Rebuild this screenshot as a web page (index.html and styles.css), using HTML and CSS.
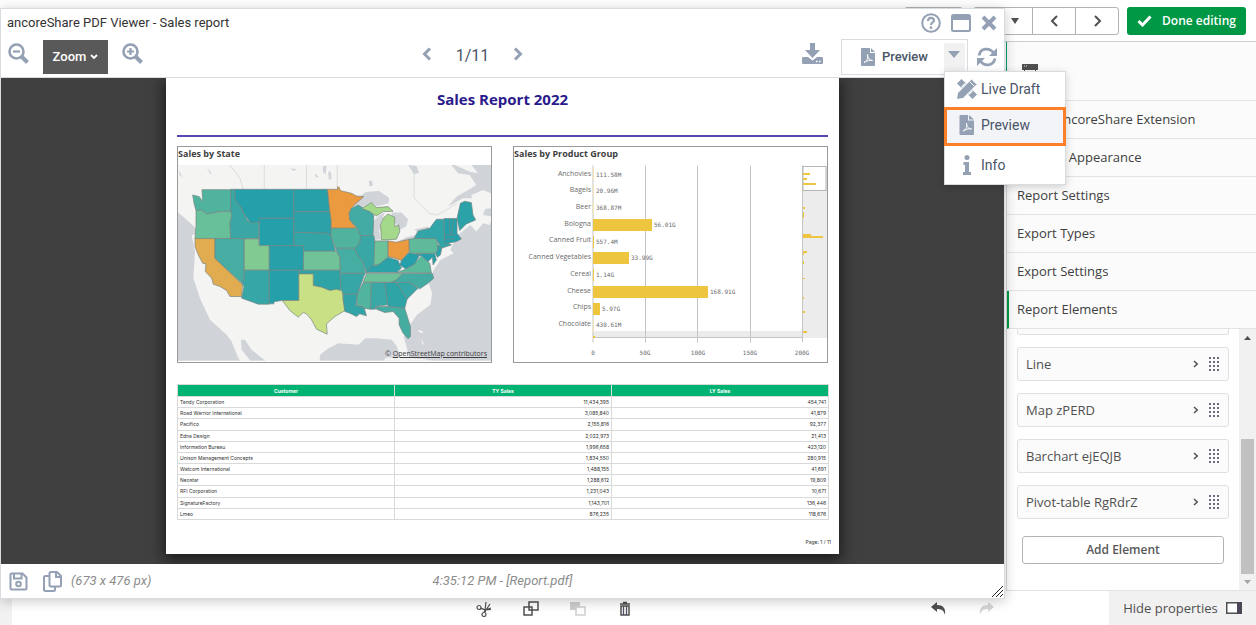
FILE: index.html
```html
<!DOCTYPE html>
<html lang="en">
<head>
<meta charset="utf-8">
<title>ancoreShare PDF Viewer - Sales report</title>
<link rel="stylesheet" href="styles.css">
</head>
<body>
<div class="app">
  <header class="topbar">
    <button class="btn btn-edge" aria-label="Sheet"></button>
    <div class="btn-group">
      <button class="btn btn-caret" aria-label="Sheets"><svg width="10" height="6" viewBox="0 0 10 6"><path d="M1 0h8L5 6z" fill="#505050"/></svg></button>
      <button class="btn" aria-label="Previous sheet"><svg width="9" height="12" viewBox="0 0 9 12"><path d="M7 1 2 6l5 5" fill="none" stroke="#505050" stroke-width="2"/></svg></button>
      <button class="btn" aria-label="Next sheet"><svg width="9" height="12" viewBox="0 0 9 12"><path d="M2 1l5 5-5 5" fill="none" stroke="#505050" stroke-width="2"/></svg></button>
    </div>
    <button class="btn-done"><svg width="15" height="12" viewBox="0 0 15 12"><path d="M1.500 6l4 4L13.500 1.500" fill="none" stroke="#fff" stroke-width="3"/></svg>Done editing</button>
  </header>

  <main class="workspace">
    <div class="canvas"></div>
    <aside class="props">
      <div class="props-head"><svg width="16" height="16" viewBox="0 0 16 16"><path d="M0 0h16v6h-2v2h-1V6H3v2H2V6H0z" fill="#505050"/><path d="M2 2h1M4 2h1" stroke="#ddd"/></svg></div>
      <button class="section tucked">ancoreShare Extension</button>
      <button class="section tucked">&amp; Appearance</button>
      <button class="section">Report Settings</button>
      <button class="section">Export Types</button>
      <button class="section">Export Settings</button>
      <button class="section current">Report Elements</button>
      <div class="elements">
        <div class="list">
          <div class="card-tail"></div>
          <button class="card"><span>Line</span><svg class="card-go" viewBox="0 0 6 8"><path d="M1 1l3.200 3L1 7" /></svg><svg class="grip" viewBox="0 0 11 14"><path d="M1 0v14M5 0v14M9 0v14"/></svg></button>
          <button class="card"><span>Map zPERD</span><svg class="card-go" viewBox="0 0 6 8"><path d="M1 1l3.200 3L1 7" /></svg><svg class="grip" viewBox="0 0 11 14"><path d="M1 0v14M5 0v14M9 0v14"/></svg></button>
          <button class="card"><span>Barchart ejEQJB</span><svg class="card-go" viewBox="0 0 6 8"><path d="M1 1l3.200 3L1 7" /></svg><svg class="grip" viewBox="0 0 11 14"><path d="M1 0v14M5 0v14M9 0v14"/></svg></button>
          <button class="card"><span>Pivot-table RgRdrZ</span><svg class="card-go" viewBox="0 0 6 8"><path d="M1 1l3.200 3L1 7" /></svg><svg class="grip" viewBox="0 0 11 14"><path d="M1 0v14M5 0v14M9 0v14"/></svg></button>
          <button class="add">Add Element</button>
        </div>
        <div class="scroll">
          <svg width="7" height="4" viewBox="0 0 7 4"><path d="M0 4h7L3.500 0z" fill="#505050"/></svg>
          <div class="thumb"></div>
          <svg width="7" height="4" viewBox="0 0 7 4"><path d="M0 0h7L3.500 4z" fill="#a3a3a3"/></svg>
        </div>
      </div>
    </aside>
  </main>

  <footer class="bottombar">
    <div class="edit-tools">
      <button class="tool" aria-label="Cut"><svg viewBox="0 0 16 16"><g fill="none" stroke="#505050" stroke-width="1.200"><circle cx="3" cy="6.500" r="2"/><circle cx="8" cy="13.500" r="2"/><path d="M5 7.500l4 1.500 6-.5M8 11.500 9 9 10 1M5 7l4 2 6-2M9 11l1-2 4-6"/></g></svg></button>
      <button class="tool" aria-label="Copy"><svg viewBox="0 0 16 16"><g fill="#fff" stroke="#505050" stroke-width="1.500"><path d="M1 6h8v8H1zM6 1h9v8H6z"/></g></svg></button>
      <button class="tool" aria-label="Paste" disabled><svg viewBox="0 0 16 16"><path d="M0 1h10v8H0z" fill="#cfcfcf"/><path d="M6 6h9v8H6z" fill="#fff" stroke="#cfcfcf" stroke-width="1.500"/></svg></button>
      <button class="tool" aria-label="Delete"><svg viewBox="0 0 16 16"><path d="M3 3h10M6 1.500h4M4 5v9h8V5z" fill="none" stroke="#505050" stroke-width="1.500"/><path d="M6.500 5v9M9.500 5v9" stroke="#505068" stroke-width="1.300"/></svg></button>
    </div>
    <div class="history">
      <button class="tool" aria-label="Undo"><svg viewBox="0 0 16 16"><path d="M0 6l6-5v3c6 0 9 3 8 10-1-4-3-6-8-6v3z" fill="#505050"/></svg></button>
      <button class="tool" aria-label="Redo" disabled><svg viewBox="0 0 16 16"><path d="M16 6l-6-5v3c-6 0-9 3-8 10 1-4 3-6 8-6v3z" fill="#d6d6d6"/></svg></button>
    </div>
    <button class="hide-props">Hide properties<svg width="16" height="12" viewBox="0 0 16 12"><path d="M.75.75h14.500v10.500H.75z" fill="#fff" stroke="#505050" stroke-width="1.500"/><path d="M11 0h5v12h-5z" fill="#4c4656"/></svg></button>
  </footer>
</div>

<section class="viewer" aria-label="PDF viewer">
  <div class="titlebar">
    <h1>ancoreShare PDF Viewer - Sales report</h1>
    <div class="win-buttons">
      <button class="icon" aria-label="Help"><svg width="20" height="20" viewBox="0 0 20 20"><circle cx="10" cy="10" r="8.800" fill="none" stroke="#94a0b4" stroke-width="2"/><path d="M7 8c0-4 6-4 6-.6C13 9.500 10 9.300 10 12" fill="none" stroke="#94a0b4" stroke-width="2.200"/><circle cx="10" cy="14.700" r="1.400" fill="#94a0b4"/></svg></button>
      <button class="icon" aria-label="Maximize"><svg width="20" height="18" viewBox="0 0 20 18"><rect x="1" y="1" width="18" height="16" rx="1.500" fill="#fff" stroke="#94a0b4" stroke-width="2"/><path d="M1 1h18v5H1z" fill="#94a0b4"/></svg></button>
      <button class="icon" aria-label="Close"><svg width="16" height="16" viewBox="0 0 16 16"><path d="M2 2l12 12M14 2 2 14" stroke="#94a0b4" stroke-width="4"/></svg></button>
    </div>
  </div>
  <div class="toolbar">
    <div class="zoom-tools">
      <button class="icon lens" aria-label="Zoom out"><svg width="21" height="21" viewBox="0 0 21 21"><g fill="none" stroke="#94a0b4"><circle cx="8.500" cy="8.500" r="7" stroke-width="2.600"/><path d="M5 8.500h7" stroke-width="2.200"/><path d="M13.500 13.500l6 6" stroke-width="4"/></g></svg></button>
      <button class="zoom-btn">Zoom<svg width="8" height="6" viewBox="0 0 8 6"><path d="M1 1l3 3 3-3" fill="none" stroke="#fff" stroke-width="1.800"/></svg></button>
      <button class="icon lens" aria-label="Zoom in"><svg width="21" height="21" viewBox="0 0 21 21"><g fill="none" stroke="#94a0b4"><circle cx="8.500" cy="8.500" r="7" stroke-width="2.600"/><path d="M5 8.500h7M8.500 5v7" stroke-width="2.200"/><path d="M13.500 13.500l6 6" stroke-width="4"/></g></svg></button>
    </div>
    <div class="pager">
      <button class="icon" aria-label="Previous page"><svg width="10" height="14" viewBox="0 0 10 14"><path d="M8 1.500 2.500 7 8 12.500" fill="none" stroke="#94a0b4" stroke-width="3"/></svg></button>
      <span class="page-no">1/11</span>
      <button class="icon" aria-label="Next page"><svg width="10" height="14" viewBox="0 0 10 14"><path d="M2 1.500 7.500 7 2 12.500" fill="none" stroke="#94a0b4" stroke-width="3"/></svg></button>
    </div>
    <div class="actions">
      <button class="icon download" aria-label="Download"><svg width="21" height="21" viewBox="0 0 21 21"><path d="M8 0h5v7h5l-7.500 8L3 7h5z" fill="#94a0b4"/><path d="M1 14h5l4.500 3.500L15 14h5q1 0 1 1v5q0 1-1 1H1q-1 0-1-1v-5q0-1 1-1z" fill="#94a0b4"/><path d="M14 18.500h1.500M17 18.500h1.500" stroke="#fff" stroke-width="1.500"/></svg></button>
      <div class="split">
        <button class="split-main"><svg width="14" height="18" viewBox="0 0 14 18"><path d="M1 0h8v5h5v12q0 1-1 1H1q-1 0-1-1V1q0-1 1-1zM10 0l4 4h-4z" fill="#94a0b4"/><path d="M3 14.500c4-2 4-5 3.500-8 0 4 2 5.500 5 6-3-.5-5 0-8.500 2z" fill="none" stroke="#fff"/></svg>Preview</button>
        <button class="split-caret" aria-label="Choose mode"><svg width="12" height="7" viewBox="0 0 12 7"><path d="M0 0h12L6 7z" fill="#94a0b4"/></svg></button>
      </div>
      <button class="icon" aria-label="Refresh"><svg width="20" height="20" viewBox="0 0 20 20"><g fill="none" stroke="#94a0b4" stroke-width="2.800"><path d="M2 8.500C3.500 1 12.500 0 16.500 6"/><path d="M18 11.500C16.500 19 7.500 20 3.500 14"/></g><path d="M20 1v8h-8zM0 19v-8h8z" fill="#94a0b4"/></svg></button>
    </div>
  </div>

  <div class="stage">
    <article class="paper">
      <h2>Sales Report 2022</h2>
      <div class="panels">
        <figure class="panel">
          <figcaption>Sales by State</figcaption>
          <div class="map-box">
          <svg class="map" viewBox="24 75 940 588" role="img" aria-label="Map of sales by state">
            <path d="M24 75h940v588H24z" fill="#d0d3d8"/>
            <path class="land" d="M24 75H845l20 25 35 5 20 30-25 15-35 20-25 30 45-25 40 0 30 20-10 30 30 5-10 25-20-5-20 25-18-20-42 35-18 40 10 10-40 20-20 30-15 40 10 30-5 35-40 30-25 35-15 30 17 65-3 25-20-15-15-45-15-20-45-5-35 0-20 20-60-5-30 15-25 20-5 45-7 80H370l-25-50-50-50-50-40-20-30-12 0 2 30 40 50 35 50 5 30-45-45-45-60-20-50-15-20-50-45-30-65-20-60 5-80-10-50 30-5-50-45-24-20z"/>
            <path class="land" d="M905 165l35-15 24 10v45l-50 5zM855 75h50l20 25-25-5zM24 120l20 10 40 30-30-12-30-20zM745 570l15 5-2 5-12-5zM755 595l8 20-5-2zM650 653l60 0 50 5 30 5H640zM860 200l55-20 10 5-50 20z"/>
            <path class="borderline" d="M283 75v73M502 75v65M410 75v73M180 75l30 40 10 33M733 75v100M733 175l45 45 25 5 60-35"/>
            <g fill="#d0d3d8">
              <path d="M543 198l15-20 30-22 40-3 30 20-2 18-35 8-20-10-22 10zM612 300l-2-55 20-20 15-7-10 25-7 30 5 25zM665 218l30 0 20 20-5 20-25 15-5-20-10-10zM680 307l30-15 40-10-10 12-35 15zM735 268l40-8 5 7-40 8zM715 75l25 3 8 20-15 5zM460 78l10 0-3 25-8-8zM475 95l8 0 2 22-8 2zM435 100l12 10-8 3zM110 80l15 20-4 3zM28 92l10 22-10-10zM597 123l10 0 2 14-10 2zM360 85l20 3-8 5z"/>
            </g>
            <g class="states">
              <path fill="#4fb39e" d="M96 149H182V214L150 215 110 222 95 210 78 212 72 190 68 165 88 170 98 185z"/>
              <path fill="#68c09a" d="M78 212L95 210 110 222 150 215 182 214 186 225 180 250 182 296H75L78 260z"/>
              <path fill="#e0ac4f" d="M75 296H135V355L218 435 215 470H180L170 452 150 440 130 433 125 415 106 395 108 372 98 370 85 345 75 320z"/>
              <path fill="#47ada2" d="M135 296H223V410L216 430 135 355z"/>
              <path fill="#3aa7a5" d="M182 148H194L196 175 215 205 220 218 235 245 267 240V296H182L180 250 186 225 182 214z"/>
              <path fill="#24a0aa" d="M194 148H372V235H270L268 246 240 248 220 218 215 205 196 178z"/>
              <path fill="#24a0aa" d="M268 235H372V317H268z"/>
              <path fill="#81cb93" d="M223 297H267V317H298V391H223z"/>
              <path fill="#27a0a9" d="M298 317H401V391H298z"/>
              <path fill="#36a6a6" d="M223 391H298V493H265L215 475 222 440 216 430 223 410z"/>
              <path fill="#24a0aa" d="M298 391H387V482H335L312 486V492H298z"/>
              <path fill="#27a0a9" d="M372 148H473L480 215H372z"/>
              <path fill="#2ca2a8" d="M372 215H480L484 240V288L470 280 372 277z"/>
              <path fill="#33a5a7" d="M372 277L470 280 484 288 497 334H401V317H372z"/>
              <path fill="#70c398" d="M401 334H500L511 355V391H401z"/>
              <path fill="#2fa4a7" d="M387 391H511L513 450 480 452 455 442 430 437V402H387z"/>
              <path fill="#c9e085" d="M387 402H430V437L455 442 480 452 500 448 518 455 520 480 526 512 495 530 470 552 472 583 440 568 425 540 410 522 400 518 385 532 360 512 337 482H387z"/>
              <path fill="#ec9a3f" d="M473 148H503V140L508 142 512 152 545 160 560 168 582 170 553 195 545 205 538 220 540 240 560 265H484V240L480 215z"/>
              <path fill="#4fb39e" d="M484 265H560L575 290 570 310 555 325H497L484 288z"/>
              <path fill="#46ada2" d="M497 325H555L562 345 580 365 588 400 580 404 575 400H511V355z"/>
              <path fill="#36a6a6" d="M511 401H585L575 430 563 463H520L518 455 513 450z"/>
              <path fill="#30a4a7" d="M520 463H563L558 498 582 500 590 528 570 522 560 530 540 520 525 515 520 480z"/>
              <path fill="#43aba3" d="M545 205L565 195 600 215 612 225 610 287H572L560 262 540 240 538 220z"/>
              <path fill="#38a7a5" d="M572 287H612L615 303V370L605 390 590 398 580 365 562 345 555 325 570 310z"/>
              <path fill="#a4d88b" d="M575 205L605 188 620 203 655 200 670 214 640 215 620 228 600 215z"/>
              <path fill="#a4d88b" d="M635 300L632 255 640 235 655 222 675 232 675 260 687 255 690 275 680 298z"/>
              <path fill="#6dc299" d="M615 303H655V352L640 365 625 375H612z"/>
              <path fill="#ec9a3f" d="M655 303L680 307 718 298V335L695 362 675 355 655 350z"/>
              <path fill="#2aa2a8" d="M590 398L605 378 625 375 655 352 685 362 695 385 680 398z"/>
              <path fill="#6dc299" d="M580 427L590 401H700L680 420 665 427z"/>
              <path fill="#50b49e" d="M580 428H605L602 508 580 505 578 498H560L563 463z"/>
              <path fill="#3aa8a5" d="M605 428H645L655 495 617 500V508H602z"/>
              <path fill="#2fa4a7" d="M645 428H680L712 478 705 505 655 500z"/>
              <path fill="#45aca2" d="M617 501L655 500 705 505 722 560V590L715 597 700 580 688 555V535L670 515 645 518 620 508z"/>
              <path fill="#36a6a6" d="M680 430L695 424 715 425 745 445 712 478z"/>
              <path fill="#44aba3" d="M700 401H788L792 415 775 430 750 447 720 428 665 427 680 420z"/>
              <path fill="#5bb99c" d="M680 398L710 387 730 375 755 348 780 370 785 399z"/>
              <path fill="#24a0aa" d="M695 362L718 338 750 345 735 372 708 387 690 375z"/>
              <path fill="#24a0aa" d="M738 341H795L800 360 790 375 788 352 775 365 755 348z"/>
              <path fill="#5fba9b" d="M718 298L730 296H798L805 315 803 332 795 340H720z"/>
              <path fill="#2ca2a8" d="M805 315L817 322 812 345 803 352 797 340 803 332z"/>
              <path fill="#31a5a7" d="M733 295L745 273 780 265 800 238H823L825 305 845 315 815 325 798 296z"/>
              <path fill="#24a0aa" d="M823 236H862V280L875 297 860 305 825 312zM838 236L842 285M852 236L846 285M825 285H860M825 297H855"/>
              <path fill="#2aa2a8" d="M862 235L872 190 885 184 905 188 910 225 918 240 890 252 870 272z"/>
            </g>
          </svg>
          <a class="credit" href="#osm">© <u>OpenStreetMap contributors</u></a>
          </div>
        </figure>

        <figure class="panel">
          <figcaption>Sales by Product Group</figcaption>
          <svg class="chart" viewBox="0 0 313 196" role="img" aria-label="Bar chart of sales by product group">
            <path d="M79 166h210v7H79z" fill="#ececec"/>
            <path d="M289 1h24v172h-24z" fill="#ececec"/>
            <path d="M79 .500v177M131.500 .500v177M183.500 .500v177M236.500 .500v177M288.500 .500v177M79 172.500h210" stroke="#c4c4c4" fill="none"/>
            <rect x="289" y="1.500" width="23" height="24" fill="#fff" stroke="#b5b5b5"/>
            <g fill="#edc53f">
              <path d="M79 54h59v12H79zM79 87h36v12H79zM79 121h115v12H79zM79 138h7v12h-7z"/>
              <path d="M79 71h1v12h-1zM79 104h1v12h-1zM79 171h2v2h-2z"/>
              <path d="M289 8h7v2h-7zM289 13h4v2h-4zM289 18h13v2h-13zM289 42h2v2h-2zM289 69h8v2h-8zM289 71h20v2h-20zM289 86h4v2h-4zM289 88h1v2h-1zM289 113h2v1h-2zM289 132h1v2h-1zM289 146h2v2h-2zM289 166h4v2h-4zM289 96h1v3h-1zM289 47h1v6h-1z"/>
            </g>
            <path d="M79.500 3v12M79.500 20v12M79.500 37v12M79.500 155v12" stroke="#f6e6ae"/>
            <g class="cat">
              <text x="77" y="11">Anchovies</text><text x="77" y="27">Bagels</text><text x="77" y="44">Beer</text><text x="77" y="61">Bologna</text><text x="77" y="77">Canned Fruit</text><text x="77" y="94">Canned Vegetables</text><text x="77" y="111">Cereal</text><text x="77" y="128">Cheese</text><text x="77" y="144">Chips</text><text x="77" y="161">Chocolate</text>
            </g>
            <g class="val">
              <text x="82" y="12">111.58M</text><text x="82" y="28">20.96M</text><text x="82" y="45">368.87M</text><text x="140" y="62">56.01G</text><text x="82" y="79">557.4M</text><text x="117" y="95">33.99G</text><text x="82" y="112">1.14G</text><text x="196" y="129">168.91G</text><text x="88" y="146">5.97G</text><text x="82" y="162">430.61M</text>
            </g>
            <g class="tick">
              <text x="79" y="190">0</text><text x="131" y="190">50G</text><text x="184" y="190">100G</text><text x="236" y="190">150G</text><text x="288" y="190">200G</text>
            </g>
          </svg>
        </figure>
      </div>

      <table class="sales">
        <thead><tr><th>Customer</th><th>TY Sales</th><th>LY Sales</th></tr></thead>
        <tbody>
          <tr><td>Tandy Corporation</td><td>11,434,395</td><td>454,741</td></tr>
          <tr><td>Road Warrior International</td><td>3,085,840</td><td>41,879</td></tr>
          <tr><td>Pacifico</td><td>2,155,816</td><td>92,377</td></tr>
          <tr><td>Edna Design</td><td>2,022,973</td><td>21,413</td></tr>
          <tr><td>Information Bureau</td><td>1,996,658</td><td>423,120</td></tr>
          <tr><td>Unison Management Concepts</td><td>1,834,550</td><td>280,915</td></tr>
          <tr><td>Watcom International</td><td>1,488,155</td><td>41,691</td></tr>
          <tr><td>Neostar</td><td>1,288,612</td><td>19,809</td></tr>
          <tr><td>RFI Corporation</td><td>1,231,043</td><td>10,671</td></tr>
          <tr><td>SignatureFactory</td><td>1,143,701</td><td>136,446</td></tr>
          <tr><td>Lmeo</td><td>876,235</td><td>118,676</td></tr>
        </tbody>
      </table>
      <p class="page-mark">Page: 1 / 11</p>
    </article>
  </div>

  <div class="statusbar">
    <div class="status-left">
      <button class="icon" aria-label="Save"><svg width="19" height="19" viewBox="0 0 19 19"><g fill="none" stroke="#94a0b4" stroke-width="2"><path d="M2.500 1.500h11l4 4v11q0 1-1 1h-14q-1 0-1-1v-14q0-1 1-1z"/><path d="M5 2v4.500h7.500V2"/><circle cx="9.500" cy="12" r="2.300"/></g></svg></button>
      <button class="icon" aria-label="Copy file"><svg width="19" height="21" viewBox="0 0 19 21"><g fill="none" stroke="#94a0b4" stroke-width="2"><path d="M8 1h6l4 4v9q0 1.500-1.500 1.500H8q-1.500 0-1.500-1.500V2.500Q6.500 1 8 1z"/><path d="M13 1.500V6h4.500M6 5H2.500Q1 5 1 6.500v12Q1 20 2.500 20h8q1.500 0 1.500-1.500V16"/></g></svg></button>
      <span>(673 x 476 px)</span>
    </div>
    <span>4:35:12 PM - [Report.pdf]</span>
    <svg class="resize" width="11" height="11" viewBox="0 0 11 11"><path d="M0 11 11 0M4 11l7-7M8 11l3-3" stroke="#222" stroke-width="1"/></svg>
  </div>

  <div class="menu" role="menu">
    <button class="menu-item" role="menuitem"><svg width="20" height="20" viewBox="0 0 20 20"><path d="M0 4.500 4.500 0 20 15.500 15.500 20z" fill="#94a0b4"/><path d="M4.500 8.500l2-2M8.500 4.500l-2 2M11.500 15.500l2-2M15.500 11.500l-2 2" stroke="#fff" stroke-width="1.500"/><path d="M-.5 20.500l1-6.500L14.500 0 20 5.500 6 19.500z" fill="#94a0b4" stroke="#fff"/><path d="M12.500 2.500l5 5" stroke="#fff"/></svg><span>Live Draft</span></button>
    <button class="menu-item chosen" role="menuitem"><svg width="20" height="20" viewBox="0 0 20 20"><path d="M4 0h7v5.500h6V19q0 1-1 1H3.500q-1 0-1-1V1q0-1 1-1zM12 0l5 4.500h-5z" fill="#94a0b4"/><path d="M6 16c4-2 4-5 3.500-8 0 4 2 5.500 5 6-3-.5-5 0-8.500 2z" fill="none" stroke="#fff"/></svg><span>Preview</span></button>
    <button class="menu-item" role="menuitem"><svg width="20" height="20" viewBox="0 0 20 20"><circle cx="10" cy="2.500" r="2.500" fill="#94a0b4"/><path d="M6.500 7H12v10h2v3H6v-3h2v-7H6.500z" fill="#94a0b4"/></svg><span>Info</span></button>
  </div>
</section>
</body>
</html>
```

FILE: styles.css
```css
* { box-sizing: border-box; }
body { margin: 0; background: #fff; color: #404040; font: 13px/18px "Open Sans", "Noto Sans", sans-serif; overflow: hidden; }
button { margin: 0; padding: 0; border: 0; background: none; color: inherit; font: inherit; }
svg { display: block; flex: none; }
h1, h2, p, figure { margin: 0; }

.app { display: flex; flex-direction: column; height: 100vh; }

.topbar { display: flex; justify-content: flex-end; align-items: flex-start; height: 42px; padding: 7px 10px 0 0; border-bottom: 1px solid #ccc; }
.btn { display: flex; align-items: center; justify-content: center; width: 44px; height: 28px; border: 1px solid #b3b3b3; background: #fff; }
.btn-edge { width: 59px; margin-right: 10px; border-radius: 3px; }
.btn-group { display: flex; margin-right: 8px; }
.btn-group .btn + .btn { margin-left: -1px; }
.btn-group .btn:first-child { width: 60px; padding-left: 24px; border-radius: 3px 0 0 3px; }
.btn-group .btn:last-child { border-radius: 0 3px 3px 0; }
.btn-done { display: flex; align-items: center; justify-content: center; gap: 10px; width: 119px; height: 28px; border-radius: 3px; background: #009845; color: #fff; font-size: 12px; font-weight: 600; }

.workspace { display: flex; flex: 1; min-height: 0; }
.canvas { flex: 1; border-left: 12px solid #f1f1f1; }
.props { display: flex; flex-direction: column; width: 250px; border-left: 1px solid #d9d9d9; background: #fbfbfb; }
.props-head { height: 59px; padding: 22px 15px 0; margin-left: -1px; border-left: 1px solid #00a070; border-bottom: 1px solid #e3e3e3; }
.section { height: 38px; flex: none; padding: 0 10px 2px; border-bottom: 1px solid #e3e3e3; text-align: left; }
.tucked { padding-left: 49px; }
.current { padding-left: 8px; border-left: 2px solid #009845; }
.elements { display: flex; flex: 1; min-height: 0; background: #fff; border-bottom: 1px solid #e3e3e3; }
.list { display: flex; flex-direction: column; gap: 12px; flex: 1; padding: 0 10px; }
.card-tail { height: 6px; border: 1px solid #e0e0e0; border-top: 0; border-radius: 0 0 3px 3px; background: #fbfbfb; }
.card { display: flex; align-items: center; gap: 10px; height: 34px; padding: 0 8px; border: 1px solid #e0e0e0; border-radius: 3px; background: #fbfbfb; color: #505050; font-weight: 500; text-align: left; }
.card span { flex: 1; }
.card-go { width: 6px; height: 8px; fill: none; stroke: #505050; stroke-width: 1.500; }
.grip { width: 11px; height: 14px; fill: none; stroke: #6b6b80; stroke-width: 2; stroke-dasharray: 2 2; }
.add { height: 28px; margin: 5px 5px 0; border: 1px solid #b3b3b3; border-radius: 3px; background: #fff; color: #595959; font-size: 12px; font-weight: 600; }
.scroll { display: flex; flex-direction: column; align-items: center; width: 17px; padding: 7px 0 6px; background: #f1f1f1; }
.thumb { width: 13px; height: 135px; margin: auto 0 6px; background: #c1c1c1; }

.bottombar { display: flex; align-items: stretch; height: 34px; border-left: 12px solid #f1f1f1; }
.edit-tools { display: flex; align-items: center; justify-content: flex-end; gap: 31px; flex: 620; padding-top: 2px; }
.history { display: flex; align-items: center; justify-content: flex-end; gap: 31px; flex: 361; padding-top: 2px; }
.tool { width: 16px; height: 16px; }
.tool svg { width: 16px; height: 16px; }
.hide-props { display: flex; align-items: center; justify-content: center; gap: 8px; width: 147px; margin-left: 115px; background: #f1f1f1; color: #505050; font-weight: 500; }

.viewer { position: absolute; top: 8px; right: 251px; bottom: 26px; left: 0; display: flex; flex-direction: column; border: 1px solid #d8dce0; background: #fff; box-shadow: 0 2px 12px rgba(0, 0, 0, .22); font-family: Roboto, sans-serif; }
.icon { display: flex; align-items: center; justify-content: center; }
.titlebar { display: flex; align-items: center; justify-content: space-between; height: 27px; padding: 0 7px 0 6px; }
.titlebar h1 { color: #333; font-size: 13px; font-weight: 400; }
.win-buttons { display: flex; align-items: center; gap: 10px; }
.toolbar { display: flex; align-items: center; justify-content: space-between; height: 42px; padding: 0 7px; border-bottom: 1px solid #d8dce0; }
.zoom-tools { display: flex; align-items: center; gap: 14px; }
.lens { padding-bottom: 6px; }
.zoom-btn { display: flex; align-items: center; justify-content: center; gap: 4px; width: 65px; height: 34px; background: #595959; color: #fff; font-size: 13px; font-weight: 500; }
.pager { display: flex; align-items: center; gap: 24px; padding-bottom: 6px; }
.page-no { padding-top: 4px; color: #4a5568; font-size: 16px; }
.actions { display: flex; align-items: center; gap: 9px; }
.download { margin-right: 9px; padding-bottom: 6px; }
.split { display: flex; width: 127px; height: 36px; border: 1px solid #d8dce0; }
.split-main { display: flex; align-items: center; justify-content: flex-end; gap: 7px; flex: 1; padding-right: 16px; color: #4a5568; font-size: 13px; font-weight: 500; }
.split-caret { display: flex; justify-content: center; width: 21px; margin: 3px 2px 0 0; padding-top: 8px; background: #f1f1f1; }

.stage { display: flex; justify-content: center; align-items: flex-start; flex: 1; background: #404040; overflow: hidden; }
.paper { display: flex; flex-direction: column; width: 673px; height: 476px; padding: 0 11px; background: #fff; box-shadow: 0 4px 14px 2px rgba(0, 0, 0, .6); font-family: "Open Sans", sans-serif; }
.paper h2 { height: 59px; padding-top: 11px; border-bottom: 2px solid #5a45b5; color: #2a1a8c; font-size: 15px; font-weight: 700; line-height: 20px; text-align: center; }
.panels { display: grid; grid-template-columns: 1fr 1fr; gap: 21px; margin-top: 9px; }
.panel { padding-bottom: 1px; border: 1px solid #999; }
.panel figcaption { height: 18px; color: #404040; font-size: 9px; font-weight: 700; line-height: 14px; }
.map-box { position: relative; }
.map, .chart { width: 100%; height: auto; }
.land { fill: #f4f4f3; }
.borderline { fill: none; stroke: #dcdcdc; stroke-width: 3; }
.states path { stroke: #758380; stroke-width: 2; stroke-linejoin: round; }
.credit { position: absolute; right: 4px; bottom: 3px; color: #404040; font-size: 7px; line-height: 9px; text-decoration: none; }
.chart { overflow: visible; }
.cat { fill: #6b6b6b; font: 7px "Open Sans", sans-serif; text-anchor: end; }
.val { fill: #6b6b6b; font: 6px "DejaVu Sans Mono", monospace; }
.tick { fill: #6b6b6b; font: 6px "DejaVu Sans Mono", monospace; text-anchor: middle; }

.sales { width: 652px; height: 136px; margin-top: 21px; border-collapse: collapse; table-layout: fixed; color: #303030; font-family: Inter, sans-serif; font-size: 5px; line-height: 8px; }
.sales th, .sales td { padding: 0 2px; border: 1px solid #d9d9d9; }
.sales th { height: 12px; background: #00b373; color: #fff; font-weight: 700; }
.sales td { text-align: right; }
.sales td:first-child { text-align: left; }
.page-mark { margin: 17px -3px 0 0; color: #303030; font-family: Inter, sans-serif; font-size: 5px; line-height: 10px; text-align: right; }

.statusbar { position: relative; display: grid; grid-template-columns: 1fr auto 1fr; align-items: center; height: 34px; padding: 0 8px; color: #8c8c8c; font-size: 13px; font-style: italic; }
.status-left { display: flex; align-items: center; gap: 15px; }
.status-left span { margin-left: -6px; }
.resize { position: absolute; right: 1px; bottom: 1px; }

.menu { position: absolute; top: 62px; right: -62px; width: 122px; border: 1px solid #d8dce0; background: #fff; box-shadow: 0 2px 8px rgba(0, 0, 0, .18); }
.menu-item { display: flex; align-items: center; gap: 4px; width: 100%; height: 38px; padding: 0 12px; color: #4a5568; font-size: 14px; }
.menu-item:first-child { height: 35px; padding-bottom: 2px; }
.chosen { width: 122px; height: 39px; margin-left: -1px; padding: 0 10px 4px; border: 3px solid #ff7f27; background: #f2f4f8; }
```
